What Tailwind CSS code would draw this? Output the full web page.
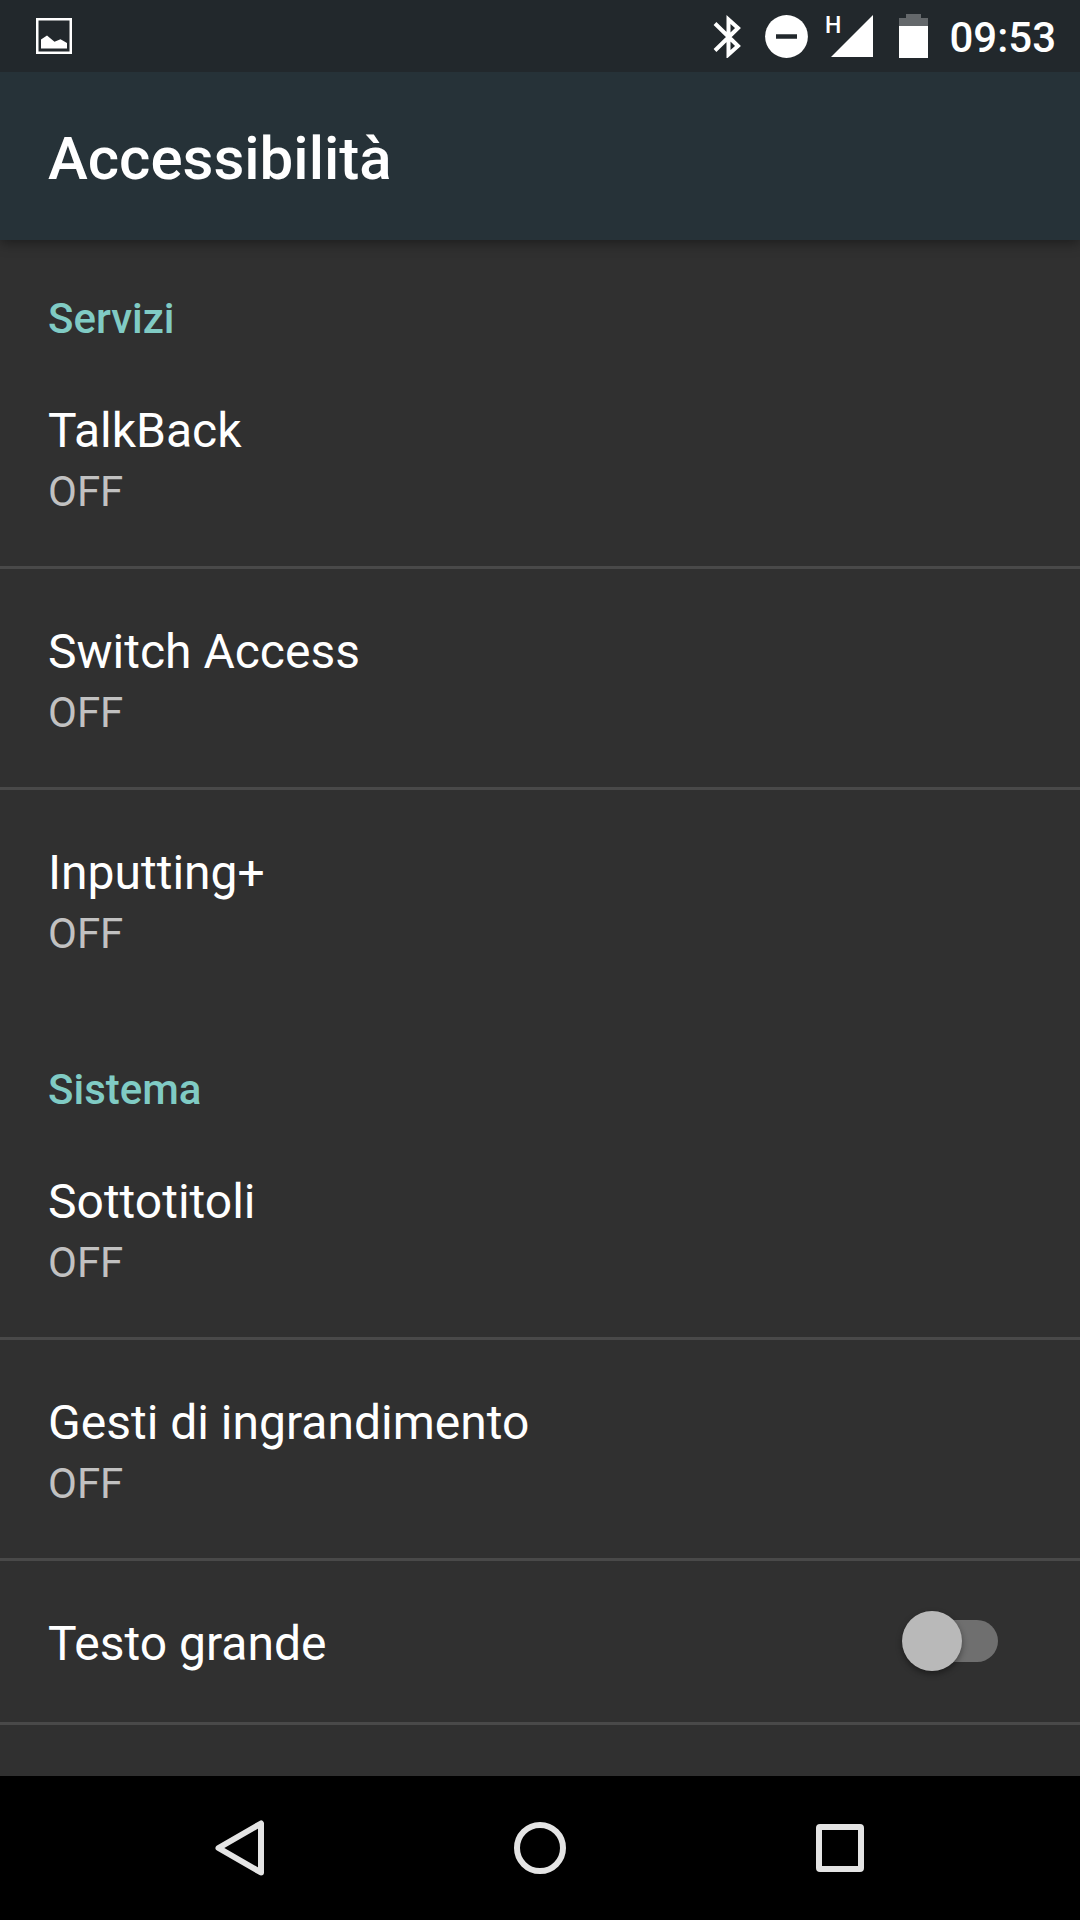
<!DOCTYPE html>
<html lang="it" class="h-full">
<head>
    <meta charset="UTF-8">
    <meta name="viewport" content="width=device-width, initial-scale=1.0">
    <title>Accessibilità</title>
    <script src="https://cdn.jsdelivr.net/npm/@tailwindcss/browser@4"></script>
</head>
<body class="h-full flex flex-col bg-[#303030] text-white font-['Roboto',sans-serif]">
    <!-- status bar -->
    <div class="relative z-10 flex shrink-0 items-center justify-between h-[72px] bg-[#22282c] pl-9 pr-6">
        <svg class="size-9" viewBox="0 0 36 36" fill="none" aria-hidden="true">
            <rect x="1.25" y="1.25" width="33.5" height="33.5" stroke="#fff" stroke-width="2.5"/>
            <path d="M5 30.500V21.500L11 17.500L18.500 23.800L24.500 21.200L31 25V30.500Z" fill="#fff"/>
        </svg>
        <div class="flex items-center">
            <svg class="w-7 h-11" viewBox="0 0 28 44" fill="none" stroke="#fff" stroke-width="4" aria-hidden="true">
                <path d="M2 9.500L25 32L15.500 40.500V5.500L25 14L2 36.500"/>
            </svg>
            <svg class="ml-6 size-11" viewBox="0 0 44 44" aria-hidden="true">
                <circle cx="21.500" cy="22.500" r="21.400" fill="#fff"/>
                <path d="M11 22.500H32" stroke="#22282c" stroke-width="4.500"/>
            </svg>
            <svg class="ml-4 w-12 h-15" viewBox="0 -8 48 60" fill="#fff" aria-hidden="true">
                <text x="0" y="19" class="text-[23px] font-medium font-['Roboto',sans-serif]">H</text>
                <path d="M48 1V43H6Z"/>
            </svg>
            <svg class="ml-6 w-8 h-11" viewBox="0 0 32 44" aria-hidden="true">
                <path d="M2 12V4H9V0H24V4H31V12Z" fill="#64686b"/>
                <path d="M2 12H31V44H2Z" fill="#fff"/>
            </svg>
            <time class="ml-5 pt-1 text-[42px] leading-[50px] font-medium">09:53</time>
        </div>
    </div>

    <header class="relative shrink-0 h-[168px] flex items-center bg-[#263238] px-12 pt-1.5 shadow-[0_3px_12px_rgba(0,0,0,0.4)]">
        <h1 class="text-[60px] leading-[70px] font-medium">Accessibilità</h1>
    </header>

    <main class="flex-1 min-h-0 overflow-y-auto">
        <section>
            <h2 class="px-12 pt-[54px] pb-1 text-[42px] leading-[50px] font-medium text-[#80cbc4]">Servizi</h2>
            <button class="block w-full text-left px-12 pt-[49px] pb-[47px] border-b-3 border-[#494949]">
                <span class="block text-[48px] leading-[68px]">TalkBack</span>
                <span class="block text-[42px] leading-[54px] text-[#c1c1c1]">OFF</span>
            </button>
            <button class="block w-full text-left px-12 pt-[49px] pb-[47px] border-b-3 border-[#494949]">
                <span class="block text-[48px] leading-[68px]">Switch Access</span>
                <span class="block text-[42px] leading-[54px] text-[#c1c1c1]">OFF</span>
            </button>
            <button class="block w-full text-left px-12 pt-[49px] pb-[47px] border-b-3 border-transparent">
                <span class="block text-[48px] leading-[68px]">Inputting+</span>
                <span class="block text-[42px] leading-[54px] text-[#c1c1c1]">OFF</span>
            </button>
        </section>
        <section>
            <h2 class="px-12 pt-[54px] pb-1 text-[42px] leading-[50px] font-medium text-[#80cbc4]">Sistema</h2>
            <button class="block w-full text-left px-12 pt-[49px] pb-[47px] border-b-3 border-[#494949]">
                <span class="block text-[48px] leading-[68px]">Sottotitoli</span>
                <span class="block text-[42px] leading-[54px] text-[#c1c1c1]">OFF</span>
            </button>
            <button class="block w-full text-left px-12 pt-[49px] pb-[47px] border-b-3 border-[#494949]">
                <span class="block text-[48px] leading-[68px]">Gesti di ingrandimento</span>
                <span class="block text-[42px] leading-[54px] text-[#c1c1c1]">OFF</span>
            </button>
            <div class="flex justify-between pl-12 pr-[82px] pt-[49px] pb-11 border-b-3 border-[#494949]">
                <label for="large-text" class="flex-1 text-[48px] leading-[68px]">Testo grande</label>
                <div class="flex items-center h-[62px]">
                    <input id="large-text" type="checkbox" role="switch" class="relative appearance-none w-[84px] h-[42px] rounded-full bg-[#6f6f6f] before:absolute before:-left-3 before:-top-[9px] before:size-[60px] before:rounded-full before:bg-[#b9b9b9] before:shadow-[0_3px_6px_rgba(0,0,0,0.4)] checked:bg-[#4d7672] checked:before:left-9 checked:before:bg-[#80cbc4]">
                </div>
            </div>
        </section>
    </main>

    <!-- navigation bar -->
    <nav class="shrink-0 flex h-36 bg-black px-[90px]">
        <button class="flex-1 flex items-center justify-center" aria-label="Indietro">
            <svg class="size-15" viewBox="0 0 60 60" fill="none" stroke="#e4e4e4" stroke-width="6" stroke-linejoin="round" aria-hidden="true">
                <path d="M51 5.500V54.500L8.500 30Z"/>
            </svg>
        </button>
        <button class="flex-1 flex items-center justify-center" aria-label="Home">
            <svg class="size-15" viewBox="0 0 60 60" fill="none" stroke="#e4e4e4" stroke-width="6" aria-hidden="true">
                <circle cx="30" cy="30" r="23"/>
            </svg>
        </button>
        <button class="flex-1 flex items-center justify-center" aria-label="Recenti">
            <svg class="size-15" viewBox="0 0 60 60" fill="none" aria-hidden="true">
                <path fill="#e4e4e4" fill-rule="evenodd" d="M10 6H50Q54 6 54 10V50Q54 54 50 54H10Q6 54 6 50V10Q6 6 10 6ZM12 12V48H48V12Z"/>
            </svg>
        </button>
    </nav>
</body>
</html>
